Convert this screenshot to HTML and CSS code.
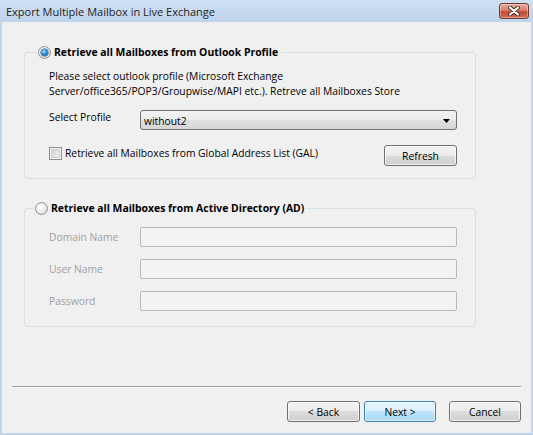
FILE: index.html
```html
<!DOCTYPE html>
<html>
<head>
<meta charset="utf-8">
<link rel="stylesheet" href="styles.css">
</head>
<body>
<div class="window">
  <div class="titlebar">
    <span class="title">Export Multiple Mailbox in Live Exchange</span>
    <span class="close">
      <svg width="14" height="10" viewBox="0 0 14 10">
        <path d="M3 1.5 L11 8.5 M11 1.5 L3 8.5" stroke="#4a2c28" stroke-width="4" stroke-linecap="round"/>
        <path d="M3 1.5 L11 8.5 M11 1.5 L3 8.5" stroke="#ffffff" stroke-width="2.2" stroke-linecap="round"/>
      </svg>
    </span>
  </div>
  <div class="client">
    <fieldset class="group g1">
      <legend><span class="radio checked"></span><span>Retrieve all Mailboxes from Outlook Profile</span></legend>
      <div class="gbody g1body">
        <p class="desc">Please select outlook profile (Microsoft Exchange<br>Server/office365/POP3/Groupwise/MAPI etc.). Retreve all Mailboxes Store</p>
        <div class="row row-select">
          <span class="label">Select Profile</span>
          <div class="select"><span>without2</span>
            <svg width="7" height="4" viewBox="0 0 7 4"><path d="M0 0 H7 L3.5 4 Z" fill="#000"/></svg>
          </div>
        </div>
        <div class="row row-check">
          <span class="check-label"><span class="checkbox"></span><span>Retrieve all Mailboxes from Global Address List (GAL)</span></span>
          <span class="btn refresh">Refresh</span>
        </div>
      </div>
    </fieldset>
    <fieldset class="group g2">
      <legend><span class="radio"></span><span>Retrieve all Mailboxes from Active Directory (AD)</span></legend>
      <div class="gbody g2body">
        <div class="row field"><span class="label dis">Domain Name</span><span class="input"></span></div>
        <div class="row field"><span class="label dis">User Name</span><span class="input"></span></div>
        <div class="row field"><span class="label dis">Password</span><span class="input"></span></div>
      </div>
    </fieldset>
    <div class="footer">
      <div class="sep"></div>
      <div class="buttons">
        <span class="btn back">&lt; Back</span>
        <span class="btn default">Next &gt;</span>
        <span class="btn cancel">Cancel</span>
      </div>
    </div>
  </div>
</div>
</body>
</html>
```
FILE: styles.css
```css
html, body {
  margin: 0;
  padding: 0;
}
body {
  font-family: "Open Sans", "Noto Sans", sans-serif;
  font-size: 10.3px;
  color: #000;
}
.window {
  width: 533px;
  height: 435px;
  box-sizing: border-box;
  background: #c1d5ec;
  padding: 0 2px 2px 2px;
  display: flex;
  flex-direction: column;
}
.titlebar {
  height: 22px;
  flex: none;
  display: flex;
  align-items: center;
  justify-content: space-between;
  padding-left: 6px;
  background: linear-gradient(#cfe0f3, #bed3ec);
  margin: 0 -2px;
  padding-right: 4px;
}
.title {
  font-size: 11px;
  color: #1e1e1e;
  padding-top: 1px;
}
.close {
  width: 30px;
  height: 16px;
  box-sizing: border-box;
  border: 1px solid #6e3a33;
  border-radius: 3px;
  background: linear-gradient(#e9a99b 0%, #d7816e 45%, #c44a34 55%, #d06a52 100%);
  display: flex;
  align-items: center;
  justify-content: center;
  box-shadow: inset 0 0 0 1px rgba(255,255,255,0.35);
}
.client {
  flex: 1;
  background: #f0f0f0;
  display: flex;
  flex-direction: column;
}
.group {
  margin: 0 0 0 22px;
  width: 452px;
  box-sizing: border-box;
  border: 1px solid #d5dfe5;
  border-radius: 3px;
  padding: 0;
  min-width: 0;
}
.g1 { margin-top: 23px; }
.g2 { margin-top: 22px; }
legend {
  display: flex;
  align-items: center;
  font-weight: bold;
  font-size: 10.4px;
  line-height: 14px;
  padding: 0 3px 0 1px;
}
.g1 legend { margin-left: 12px; }
.g2 legend { margin-left: 9px; }
.radio {
  width: 13px;
  height: 13px;
  box-sizing: border-box;
  border-radius: 50%;
  border: 1px solid #8e8f8f;
  background: radial-gradient(circle at 35% 35%, #ffffff, #e4e4e4 70%, #cfcfcf);
  margin-right: 3px;
  display: flex;
  align-items: center;
  justify-content: center;
}
.radio.checked::after {
  content: "";
  width: 7px;
  height: 7px;
  border-radius: 50%;
  background: radial-gradient(circle at 40% 35%, #9fe1ff 0%, #2d8fd0 45%, #0b4a8c 100%);
  box-shadow: 0 0 0 0.5px #1c5180;
}
.gbody {
  padding: 10px 18px 12px 24px;
}
.g2body {
  padding: 12px 18px 15px 24px;
}
.desc {
  margin: 0;
  line-height: 15px;
}
.row {
  display: flex;
}
.label {
  width: 91px;
  flex: none;
  line-height: 15px;
}
.row-select {
  margin-top: 11px;
  align-items: flex-start;
}
.select {
  flex: 1;
  height: 20px;
  box-sizing: border-box;
  border: 1px solid #707070;
  border-radius: 3px;
  background: linear-gradient(#f3f3f3 0%, #ececec 50%, #e0e0e0 50%, #d6d6d6 100%);
  display: flex;
  align-items: center;
  justify-content: space-between;
  padding: 2px 6px 0 3px;
}
.row-check {
  margin-top: 15px;
  align-items: center;
  justify-content: space-between;
}
.check-label {
  display: flex;
  align-items: center;
  margin-top: -5px;
}
.checkbox {
  width: 13px;
  height: 13px;
  box-sizing: border-box;
  border: 1px solid #8e8f8f;
  background: linear-gradient(135deg, #cbcbcb, #f6f6f6);
  box-shadow: inset 0 0 0 1px #f4f4f4, inset 0 0 0 2px #d0d0d0;
  margin-right: 3px;
  flex: none;
}
.btn {
  width: 73px;
  height: 21px;
  box-sizing: border-box;
  border: 1px solid #707070;
  border-radius: 3px;
  background: linear-gradient(#f2f2f2 0%, #ebebeb 50%, #dddddd 50%, #cfcfcf 100%);
  box-shadow: inset 0 0 0 1px rgba(255,255,255,0.7);
  display: flex;
  align-items: center;
  justify-content: center;
  flex: none;
}
.btn.default {
  width: 72px;
  border-color: #3c7fb1;
  background: linear-gradient(#eaf6fd 0%, #d9f0fc 50%, #bee6fd 50%, #a7d9f5 100%);
  box-shadow: inset 0 0 0 1px rgba(255,255,255,0.6);
}
.btn.cancel {
  width: 72px;
}
.field {
  align-items: center;
}
.field + .field {
  margin-top: 12px;
}
.dis {
  color: #a0a0a0;
}
.input {
  flex: 1;
  height: 20px;
  box-sizing: border-box;
  border: 1px solid #b9b9b9;
  border-radius: 2px;
  background: #f3f3f3;
}
.footer {
  margin-top: auto;
}
.sep {
  margin: 0 10px;
  border-top: 1px solid #a0a0a0;
  border-bottom: 1px solid #ffffff;
}
.buttons {
  display: flex;
  justify-content: flex-end;
  gap: 4px;
  padding: 13px 10px 11px 0;
}
.buttons .cancel {
  margin-left: 9px;
}
```
